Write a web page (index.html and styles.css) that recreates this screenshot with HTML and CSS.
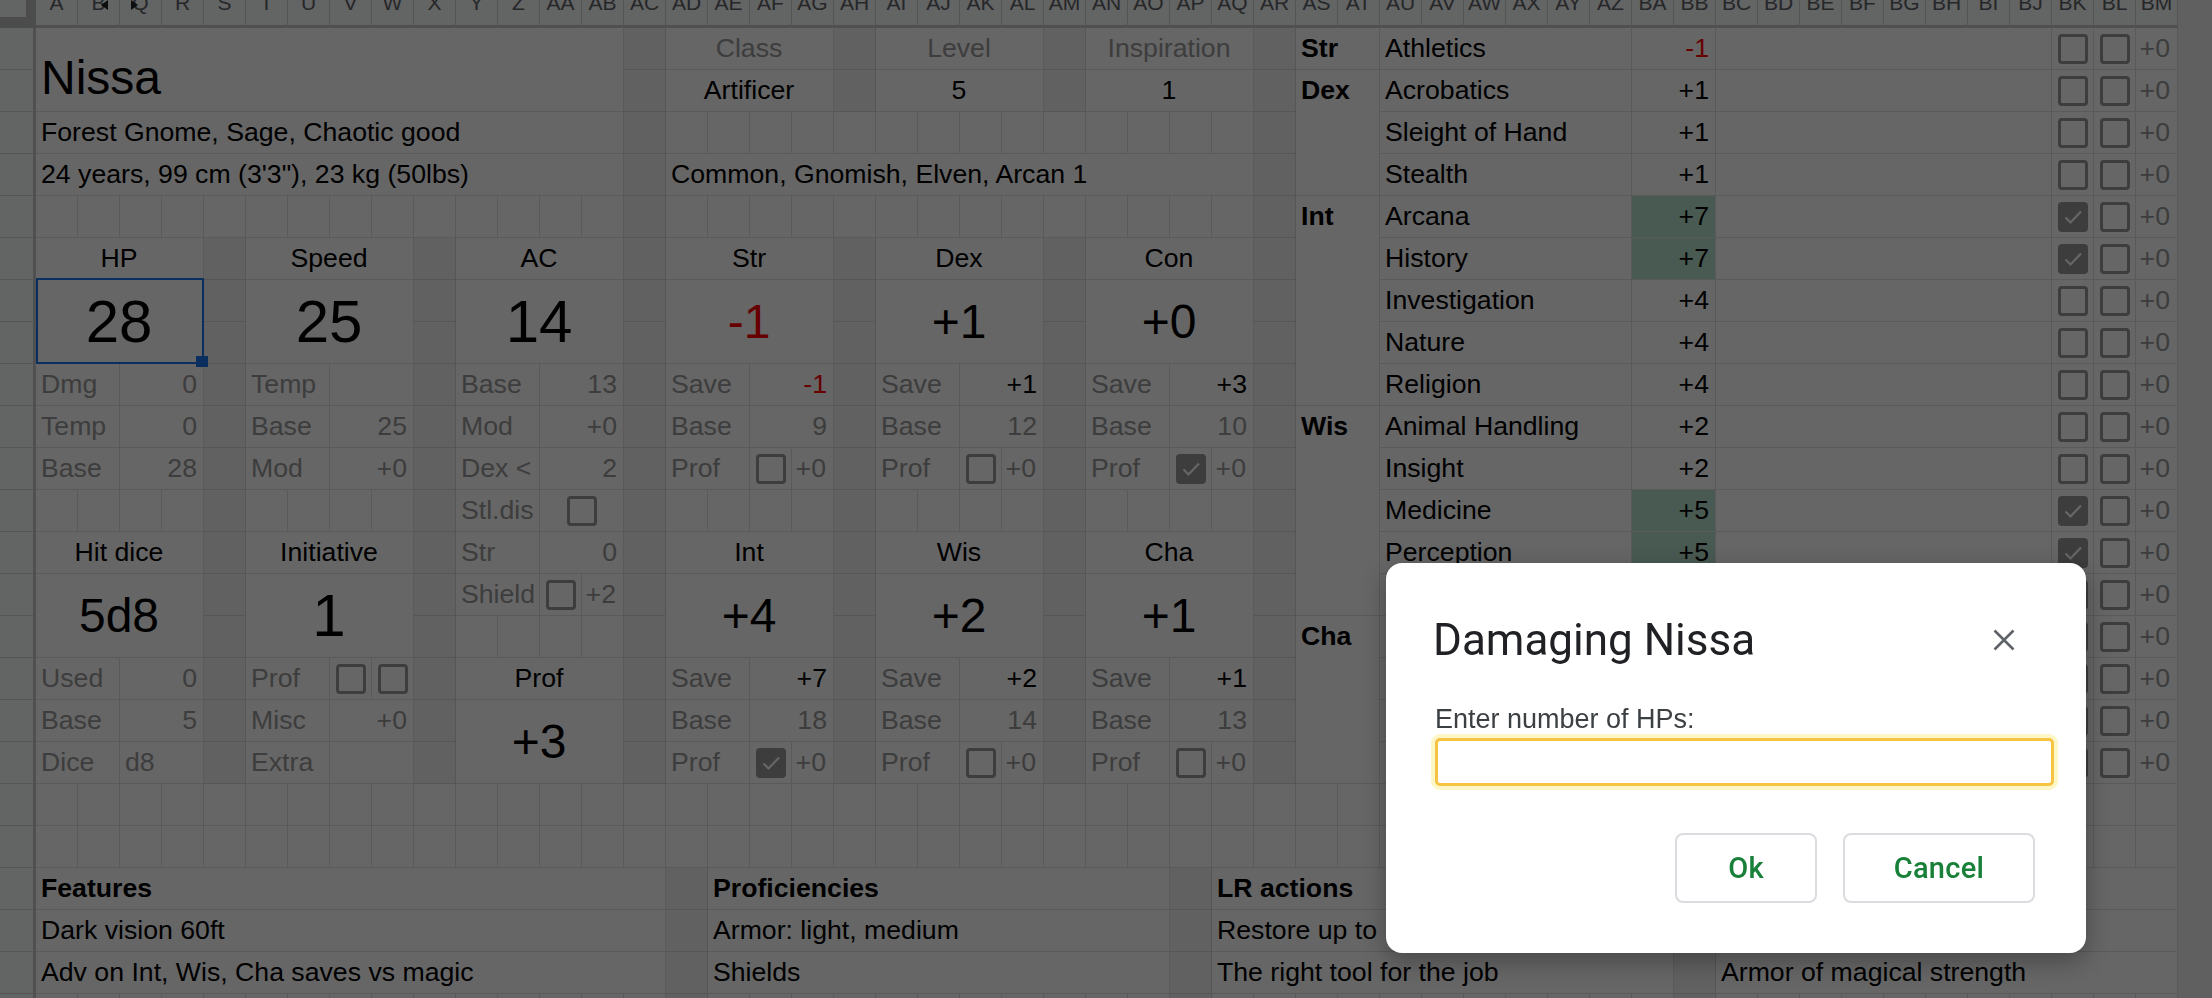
FILE: index.html
```html
<!DOCTYPE html>
<html lang="en">
<head>
<meta charset="utf-8">
<title>Nissa - Character sheet</title>
<link rel="stylesheet" href="styles.css">
</head>
<body>
<div class="app">
  <div class="colhdr">
    <div class="corner"><i></i></div>
    <div class="hc"><span>A</span></div>
    <div class="hc"><span>B</span><i class="arr-l"></i></div>
    <div class="hc"><span>Q</span><i class="arr-r"></i></div>
    <div class="hc"><span>R</span></div>
    <div class="hc"><span>S</span></div>
    <div class="hc"><span>T</span></div>
    <div class="hc"><span>U</span></div>
    <div class="hc"><span>V</span></div>
    <div class="hc"><span>W</span></div>
    <div class="hc"><span>X</span></div>
    <div class="hc"><span>Y</span></div>
    <div class="hc"><span>Z</span></div>
    <div class="hc"><span>AA</span></div>
    <div class="hc"><span>AB</span></div>
    <div class="hc"><span>AC</span></div>
    <div class="hc"><span>AD</span></div>
    <div class="hc"><span>AE</span></div>
    <div class="hc"><span>AF</span></div>
    <div class="hc"><span>AG</span></div>
    <div class="hc"><span>AH</span></div>
    <div class="hc"><span>AI</span></div>
    <div class="hc"><span>AJ</span></div>
    <div class="hc"><span>AK</span></div>
    <div class="hc"><span>AL</span></div>
    <div class="hc"><span>AM</span></div>
    <div class="hc"><span>AN</span></div>
    <div class="hc"><span>AO</span></div>
    <div class="hc"><span>AP</span></div>
    <div class="hc"><span>AQ</span></div>
    <div class="hc"><span>AR</span></div>
    <div class="hc"><span>AS</span></div>
    <div class="hc"><span>AT</span></div>
    <div class="hc"><span>AU</span></div>
    <div class="hc"><span>AV</span></div>
    <div class="hc"><span>AW</span></div>
    <div class="hc"><span>AX</span></div>
    <div class="hc"><span>AY</span></div>
    <div class="hc"><span>AZ</span></div>
    <div class="hc"><span>BA</span></div>
    <div class="hc"><span>BB</span></div>
    <div class="hc"><span>BC</span></div>
    <div class="hc"><span>BD</span></div>
    <div class="hc"><span>BE</span></div>
    <div class="hc"><span>BF</span></div>
    <div class="hc"><span>BG</span></div>
    <div class="hc"><span>BH</span></div>
    <div class="hc"><span>BI</span></div>
    <div class="hc"><span>BJ</span></div>
    <div class="hc"><span>BK</span></div>
    <div class="hc"><span>BL</span></div>
    <div class="hc"><span>BM</span></div>
  </div>

  <div class="main">
    <div class="rowhdr"></div>
    <div class="sheet">
      <div class="top">
        <div class="grid left">
          <!-- row 1 -->
          <div class="c w14 h2 name">Nissa</div>
          <i class="gap h18"></i>
          <div class="c w4 ctr gr">Class</div>
          <i class="gap h2"></i>
          <div class="c w4 ctr gr">Level</div>
          <i class="gap h2"></i>
          <div class="c w4 ctr gr">Inspiration</div>
          <i class="gap h18"></i>
          <!-- row 2 -->
          <div class="c w4 ctr">Artificer</div>
          <div class="c w4 ctr">5</div>
          <div class="c w4 ctr">1</div>
          <!-- row 3 -->
          <div class="c w14">Forest Gnome, Sage, Chaotic good</div>
          <i class="b w14"></i>
          <!-- row 4 -->
          <div class="c w14">24 years, 99 cm (3'3"), 23 kg (50lbs)</div>
          <div class="c w14">Common, Gnomish, Elven, Arcan 1</div>
          <!-- row 5 -->
          <i class="b w14"></i>
          <i class="b w14"></i>
          <!-- row 6 -->
          <div class="c w4 ctr">HP</div>
          <i class="gap h13"></i>
          <div class="c w4 ctr">Speed</div>
          <i class="gap h13"></i>
          <div class="c w4 ctr">AC</div>
          <div class="c w4 ctr">Str</div>
          <i class="gap h13"></i>
          <div class="c w4 ctr">Dex</div>
          <i class="gap h13"></i>
          <div class="c w4 ctr">Con</div>
          <!-- rows 7-8 -->
          <div class="c w4 h2 ctr big sel">28<span class="selbox"></span><span class="handle"></span></div>
          <div class="c w4 h2 ctr big">25</div>
          <div class="c w4 h2 ctr big">14</div>
          <div class="c w4 h2 ctr mid red">-1</div>
          <div class="c w4 h2 ctr mid">+1</div>
          <div class="c w4 h2 ctr mid">+0</div>
          <!-- row 9 -->
          <div class="c w2 gr">Dmg</div><div class="c w2 gr rt">0</div>
          <div class="c w2 gr">Temp</div><div class="c w2"></div>
          <div class="c w2 gr">Base</div><div class="c w2 gr rt">13</div>
          <div class="c w2 gr">Save</div><div class="c w2 rt red">-1</div>
          <div class="c w2 gr">Save</div><div class="c w2 rt">+1</div>
          <div class="c w2 gr">Save</div><div class="c w2 rt">+3</div>
          <!-- row 10 -->
          <div class="c w2 gr">Temp</div><div class="c w2 gr rt">0</div>
          <div class="c w2 gr">Base</div><div class="c w2 gr rt">25</div>
          <div class="c w2 gr">Mod</div><div class="c w2 gr rt">+0</div>
          <div class="c w2 gr">Base</div><div class="c w2 gr rt">9</div>
          <div class="c w2 gr">Base</div><div class="c w2 gr rt">12</div>
          <div class="c w2 gr">Base</div><div class="c w2 gr rt">10</div>
          <!-- row 11 -->
          <div class="c w2 gr">Base</div><div class="c w2 gr rt">28</div>
          <div class="c w2 gr">Mod</div><div class="c w2 gr rt">+0</div>
          <div class="c w2 gr">Dex &lt;</div><div class="c w2 gr rt">2</div>
          <div class="c w2 gr">Prof</div><div class="c cbc"><i class="cb"></i></div><div class="c pz gr">+0</div>
          <div class="c w2 gr">Prof</div><div class="c cbc"><i class="cb"></i></div><div class="c pz gr">+0</div>
          <div class="c w2 gr">Prof</div><div class="c cbc"><i class="cb on"><svg viewBox="0 0 24 24" width="24" height="24"><path d="M4.5 12.5l5 5L20 6.5" fill="none" stroke="#fff" stroke-width="2.2"/></svg></i></div><div class="c pz gr">+0</div>
          <!-- row 12 -->
          <i class="b w4"></i>
          <i class="b w4"></i>
          <div class="c w2 gr">Stl.dis</div><div class="c w2 cbc"><i class="cb"></i></div>
          <i class="b w4"></i>
          <i class="b w4"></i>
          <i class="b w4"></i>
          <!-- row 13 -->
          <div class="c w4 ctr">Hit dice</div>
          <div class="c w4 ctr">Initiative</div>
          <div class="c w2 gr">Str</div><div class="c w2 gr rt">0</div>
          <div class="c w4 ctr">Int</div>
          <div class="c w4 ctr">Wis</div>
          <div class="c w4 ctr">Cha</div>
          <!-- row 14-15 -->
          <div class="c w4 h2 ctr mid">5d8</div>
          <div class="c w4 h2 ctr big">1</div>
          <div class="c w2 gr">Shield</div><div class="c cbc"><i class="cb"></i></div><div class="c pz gr">+2</div>
          <div class="c w4 h2 ctr mid">+4</div>
          <div class="c w4 h2 ctr mid">+2</div>
          <div class="c w4 h2 ctr mid">+1</div>
          <i class="b w4"></i>
          <!-- row 16 -->
          <div class="c w2 gr">Used</div><div class="c w2 gr rt">0</div>
          <div class="c w2 gr">Prof</div><div class="c cbc"><i class="cb"></i></div><div class="c cbc"><i class="cb"></i></div>
          <div class="c w4 ctr">Prof</div>
          <div class="c w2 gr">Save</div><div class="c w2 rt">+7</div>
          <div class="c w2 gr">Save</div><div class="c w2 rt">+2</div>
          <div class="c w2 gr">Save</div><div class="c w2 rt">+1</div>
          <!-- row 17 -->
          <div class="c w2 gr">Base</div><div class="c w2 gr rt">5</div>
          <div class="c w2 gr">Misc</div><div class="c w2 gr rt">+0</div>
          <div class="c w4 h2 ctr mid">+3</div>
          <div class="c w2 gr">Base</div><div class="c w2 gr rt">18</div>
          <div class="c w2 gr">Base</div><div class="c w2 gr rt">14</div>
          <div class="c w2 gr">Base</div><div class="c w2 gr rt">13</div>
          <!-- row 18 -->
          <div class="c w2 gr">Dice</div><div class="c w2 gr">d8</div>
          <div class="c w2 gr">Extra</div><div class="c w2"></div>
          <div class="c w2 gr">Prof</div><div class="c cbc"><i class="cb on"><svg viewBox="0 0 24 24" width="24" height="24"><path d="M4.5 12.5l5 5L20 6.5" fill="none" stroke="#fff" stroke-width="2.2"/></svg></i></div><div class="c pz gr">+0</div>
          <div class="c w2 gr">Prof</div><div class="c cbc"><i class="cb"></i></div><div class="c pz gr">+0</div>
          <div class="c w2 gr">Prof</div><div class="c cbc"><i class="cb"></i></div><div class="c pz gr">+0</div>
        </div>

        <div class="grid skills">
          <div class="c w2 grp">Str</div><div class="c w6">Athletics</div><div class="c w2 rt red">-1</div><div class="c w8"></div><div class="c cbc"><i class="cb"></i></div><div class="c cbc"><i class="cb"></i></div><div class="c pz gr">+0</div>

          <div class="c w2 h3 grp">Dex</div><div class="c w6">Acrobatics</div><div class="c w2 rt">+1</div><div class="c w8"></div><div class="c cbc"><i class="cb"></i></div><div class="c cbc"><i class="cb"></i></div><div class="c pz gr">+0</div>
          <div class="c w6">Sleight of Hand</div><div class="c w2 rt">+1</div><div class="c w8"></div><div class="c cbc"><i class="cb"></i></div><div class="c cbc"><i class="cb"></i></div><div class="c pz gr">+0</div>
          <div class="c w6">Stealth</div><div class="c w2 rt">+1</div><div class="c w8"></div><div class="c cbc"><i class="cb"></i></div><div class="c cbc"><i class="cb"></i></div><div class="c pz gr">+0</div>

          <div class="c w2 h5 grp">Int</div><div class="c w6">Arcana</div><div class="c w2 rt grn">+7</div><div class="c w8"></div><div class="c cbc"><i class="cb on"><svg viewBox="0 0 24 24" width="24" height="24"><path d="M4.5 12.5l5 5L20 6.5" fill="none" stroke="#fff" stroke-width="2.2"/></svg></i></div><div class="c cbc"><i class="cb"></i></div><div class="c pz gr">+0</div>
          <div class="c w6">History</div><div class="c w2 rt grn">+7</div><div class="c w8"></div><div class="c cbc"><i class="cb on"><svg viewBox="0 0 24 24" width="24" height="24"><path d="M4.5 12.5l5 5L20 6.5" fill="none" stroke="#fff" stroke-width="2.2"/></svg></i></div><div class="c cbc"><i class="cb"></i></div><div class="c pz gr">+0</div>
          <div class="c w6">Investigation</div><div class="c w2 rt">+4</div><div class="c w8"></div><div class="c cbc"><i class="cb"></i></div><div class="c cbc"><i class="cb"></i></div><div class="c pz gr">+0</div>
          <div class="c w6">Nature</div><div class="c w2 rt">+4</div><div class="c w8"></div><div class="c cbc"><i class="cb"></i></div><div class="c cbc"><i class="cb"></i></div><div class="c pz gr">+0</div>
          <div class="c w6">Religion</div><div class="c w2 rt">+4</div><div class="c w8"></div><div class="c cbc"><i class="cb"></i></div><div class="c cbc"><i class="cb"></i></div><div class="c pz gr">+0</div>

          <div class="c w2 h5 grp">Wis</div><div class="c w6">Animal Handling</div><div class="c w2 rt">+2</div><div class="c w8"></div><div class="c cbc"><i class="cb"></i></div><div class="c cbc"><i class="cb"></i></div><div class="c pz gr">+0</div>
          <div class="c w6">Insight</div><div class="c w2 rt">+2</div><div class="c w8"></div><div class="c cbc"><i class="cb"></i></div><div class="c cbc"><i class="cb"></i></div><div class="c pz gr">+0</div>
          <div class="c w6">Medicine</div><div class="c w2 rt grn">+5</div><div class="c w8"></div><div class="c cbc"><i class="cb on"><svg viewBox="0 0 24 24" width="24" height="24"><path d="M4.5 12.5l5 5L20 6.5" fill="none" stroke="#fff" stroke-width="2.2"/></svg></i></div><div class="c cbc"><i class="cb"></i></div><div class="c pz gr">+0</div>
          <div class="c w6">Perception</div><div class="c w2 rt grn">+5</div><div class="c w8"></div><div class="c cbc"><i class="cb on"><svg viewBox="0 0 24 24" width="24" height="24"><path d="M4.5 12.5l5 5L20 6.5" fill="none" stroke="#fff" stroke-width="2.2"/></svg></i></div><div class="c cbc"><i class="cb"></i></div><div class="c pz gr">+0</div>
          <div class="c w6">Survival</div><div class="c w2 rt">+2</div><div class="c w8"></div><div class="c cbc"><i class="cb"></i></div><div class="c cbc"><i class="cb"></i></div><div class="c pz gr">+0</div>

          <div class="c w2 h4 grp">Cha</div><div class="c w6">Deception</div><div class="c w2 rt">+1</div><div class="c w8"></div><div class="c cbc"><i class="cb"></i></div><div class="c cbc"><i class="cb"></i></div><div class="c pz gr">+0</div>
          <div class="c w6">Intimidation</div><div class="c w2 rt">+1</div><div class="c w8"></div><div class="c cbc"><i class="cb"></i></div><div class="c cbc"><i class="cb"></i></div><div class="c pz gr">+0</div>
          <div class="c w6">Performance</div><div class="c w2 rt">+1</div><div class="c w8"></div><div class="c cbc"><i class="cb"></i></div><div class="c cbc"><i class="cb"></i></div><div class="c pz gr">+0</div>
          <div class="c w6">Persuasion</div><div class="c w2 rt">+1</div><div class="c w8"></div><div class="c cbc"><i class="cb"></i></div><div class="c cbc"><i class="cb"></i></div><div class="c pz gr">+0</div>
        </div>
      </div>

      <div class="grid bottom">
        <i class="b w51"></i>
        <i class="b w51"></i>
        <div class="c w15 bold">Features</div>
        <i class="gap h4"></i>
        <div class="c w11 bold">Proficiencies</div>
        <i class="gap h4"></i>
        <div class="c w11 bold">LR actions</div>
        <i class="gap h4"></i>
        <div class="c w11 bold">Infusions</div>
        <div class="c w15">Dark vision 60ft</div>
        <div class="c w11">Armor: light, medium</div>
        <div class="c w11">Restore up to</div>
        <div class="c w11">Enhanced defense</div>
        <div class="c w15">Adv on Int, Wis, Cha saves vs magic</div>
        <div class="c w11">Shields</div>
        <div class="c w11">The right tool for the job</div>
        <div class="c w11">Armor of magical strength</div>
      </div>
    </div>
  </div>
</div>

<div class="overlay"></div>

<div class="modal" role="dialog" aria-label="Damaging Nissa">
  <div class="mhead">
    <h2 class="mtitle">Damaging Nissa</h2>
    <button class="mclose" aria-label="Close"><svg viewBox="0 0 22 22" width="22" height="22"><path d="M1.5 1.5L20.5 20.5M20.5 1.5L1.5 20.5" stroke="#5f6368" stroke-width="2.6" fill="none"/></svg></button>
  </div>
  <label class="mlabel" for="hp">Enter number of HPs:</label>
  <input class="minput" id="hp" type="text">
  <div class="mbtns">
    <button class="btn ok">Ok</button>
    <button class="btn cancel">Cancel</button>
  </div>
</div>
</body>
</html>
```

FILE: styles.css
```css
* { box-sizing: border-box; }
html, body { margin: 0; padding: 0; }
body {
  width: 2212px;
  height: 998px;
  overflow: hidden;
  background: #f1f1f1;
  font-family: "Liberation Sans", Arial, sans-serif;
  font-size: 26.67px;
  color: #000;
}

.app { display: flex; flex-direction: column; }

/* column header */
.colhdr { display: flex; height: 28px; }
.corner { width: 36px; height: 28px; flex: none; background: #bdbdbd; }
.corner i { display: block; width: 26px; height: 17px; background: #f8f9fa; }
.hc {
  position: relative;
  width: 42px; height: 28px; flex: none;
  background: #f8f9fa;
  border-right: 1px solid #d0d0d0;
  border-bottom: 3px solid #c8c8c8;
  display: flex; justify-content: center; align-items: flex-start;
  font-size: 21px; line-height: 21px; color: #5f6368;
  overflow: hidden;
}
.hc span { margin-top: -8.5px; }
.arr-l {
  position: absolute; right: 11px; top: 0;
  width: 0; height: 0;
  border-top: 5px solid transparent; border-bottom: 5px solid transparent;
  border-right: 7px solid #202124;
}
.arr-r {
  position: absolute; left: 11px; top: 0;
  width: 0; height: 0;
  border-top: 5px solid transparent; border-bottom: 5px solid transparent;
  border-left: 7px solid #202124;
}

.main { display: flex; }
.rowhdr {
  width: 36px; flex: none; height: 980px;
  background-color: #f8f9fa;
  background-image: linear-gradient(to bottom, transparent 41px, #d6d6d6 41px);
  background-size: 100% 42px;
  border-right: 3px solid #c8c8c8;
}
.sheet { display: flex; flex-direction: column; }
.top { display: flex; }

.grid {
  display: grid;
  grid-auto-rows: 42px;
  background-color: #fff;
  background-image:
    linear-gradient(to right, transparent 41px, #e2e2e2 41px),
    linear-gradient(to bottom, transparent 41px, #e2e2e2 41px);
  background-size: 42px 42px;
}
.left { grid-template-columns: repeat(30, 42px); grid-template-rows: repeat(18, 42px); }
.skills { grid-template-columns: repeat(21, 42px); grid-template-rows: repeat(18, 42px); }
.bottom { grid-template-columns: repeat(51, 42px); grid-template-rows: repeat(6, 42px); }

/* cells */
.c {
  background: #fff;
  border-right: 1px solid #e2e2e2;
  border-bottom: 1px solid #e2e2e2;
  display: flex; align-items: center;
  padding: 0 6px 0 5px;
  white-space: nowrap;
  min-width: 0;
}
.b { display: block; }
.gap { display: block; background: rgba(0, 0, 0, 0.05); }

.w2 { grid-column: span 2; }
.w4 { grid-column: span 4; }
.w6 { grid-column: span 6; }
.w8 { grid-column: span 8; }
.w11 { grid-column: span 11; }
.w14 { grid-column: span 14; }
.w15 { grid-column: span 15; }
.w51 { grid-column: span 51; }
.h2 { grid-row: span 2; }
.h3 { grid-row: span 3; }
.h4 { grid-row: span 4; }
.h5 { grid-row: span 5; }
.h13 { grid-row: span 13; }
.h18 { grid-row: span 18; }

.ctr { justify-content: center; }
.rt { justify-content: flex-end; }
.pz { justify-content: flex-end; padding: 0 7px 0 0; }
.gr { color: #999; }
.red { color: #f00; }
.bold { font-weight: bold; }
.grn { background: #b7e1cd; }
.big { font-size: 60px; }
.mid { font-size: 48px; }
.name {
  font-size: 48px; line-height: 55px;
  align-items: flex-end; padding-bottom: 6px;
}
.grp {
  font-weight: bold;
  align-items: flex-start;
  padding-top: 5px; line-height: 31px;
}

/* selection */
.sel { position: relative; z-index: 2; }
.selbox {
  position: absolute; left: 0; top: -2px; right: -1px; bottom: -1px;
  border: 2px solid #1a73e8;
}
.handle {
  position: absolute; right: -5px; bottom: -4px;
  width: 12px; height: 11px; background: #1a73e8;
}

/* checkboxes */
.cbc { justify-content: center; padding: 0; }
.cb {
  display: block; width: 30px; height: 30px; flex: none;
  border: 3px solid #999; border-radius: 4px;
}
.cb.on { background: #999; }
.cb svg { display: block; }

/* dialog */
.overlay { position: fixed; inset: 0; background: rgba(0, 0, 0, 0.6); z-index: 10; }
.modal {
  position: absolute; left: 1386px; top: 563px; z-index: 11;
  width: 700px; height: 390px;
  background: #fff; border-radius: 16px;
  padding: 51px 51px 0 49px;
  box-shadow: 0 8px 24px rgba(0, 0, 0, 0.3);
}
.mhead { display: flex; justify-content: space-between; align-items: center; height: 52px; }
.mtitle {
  margin: 0 0 0 -2px;
  font-family: Roboto, "Noto Sans", sans-serif;
  font-weight: 400; font-size: 44px; line-height: 52px;
  color: #202124;
}
.mclose {
  width: 40px; height: 40px; margin-right: 11px;
  border: 0; padding: 0; background: none;
  display: flex; align-items: center; justify-content: center;
}
.mclose svg { display: block; }
.mlabel {
  display: block; margin-top: 38px;
  font-size: 27px; line-height: 31px; color: #3c4043;
}
.minput {
  display: block; margin: 3px 0 0 0;
  width: 619px; height: 48px;
  border: 3px solid #f6c343; border-radius: 5px;
  box-shadow: 0 0 0 4px #fdf6c6;
  outline: none; background: #fff;
}
.mbtns { display: flex; justify-content: flex-end; gap: 26px; margin-top: 47px; }
.btn {
  height: 70px; padding: 0;
  border: 2px solid #dadce0; border-radius: 8px; background: #fff;
  font-family: Roboto, "Noto Sans", sans-serif;
  font-weight: 500; font-size: 29px; letter-spacing: 0.3px;
  color: #188038;
}
.ok { width: 142px; }
.cancel { width: 192px; }
```
